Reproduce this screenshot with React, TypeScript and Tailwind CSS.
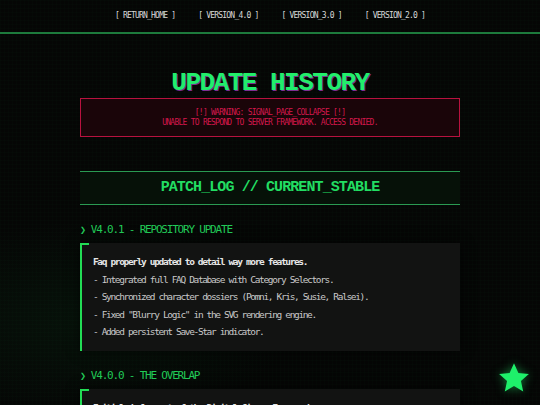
const navItems = ['RETURN_HOME', 'VERSION_4.0', 'VERSION_3.0', 'VERSION_2.0'];

const releases = [
  {
    id: 'v401',
    title: 'V4.0.1 - REPOSITORY UPDATE',
    lead: 'Faq properly updated to detail way more features.',
    notes: [
      'Integrated full FAQ Database with Category Selectors.',
      'Synchronized character dossiers (Pomni, Kris, Susie, Ralsei).',
      'Fixed "Blurry Logic" in the SVG rendering engine.',
      'Added persistent Save-Star indicator.',
    ],
  },
  {
    id: 'v400',
    title: 'V4.0.0 - THE OVERLAP',
    lead: 'Initial deployment of the Digital Circus Framework.',
    notes: [
      'Merged Dark World assets into the main repository.',
      'Rebuilt navigation terminal.',
    ],
  },
];

function SaveStar() {
  return (
    <svg viewBox="0 0 24 24" className="fixed bottom-[10px] right-[9px] h-[34px] w-[34px] drop-shadow-[0_0_5px_rgba(30,240,106,0.5)]">
      <path d="M12 1.5l3.1 6.9 7.4.8-5.6 5 1.6 7.3L12 17.7l-6.5 3.8 1.6-7.3-5.6-5 7.4-.8z" fill="#1ef06a" />
    </svg>
  );
}

export default function App() {
  return (
    <div className="relative min-h-[405px] overflow-hidden bg-[#050605] bg-[linear-gradient(rgba(40,255,120,0.012)_1px,transparent_1px),linear-gradient(90deg,rgba(40,255,120,0.012)_1px,transparent_1px)] bg-[size:4px_4px] font-['DejaVu_Sans_Mono',monospace]">
      <div className="pointer-events-none absolute left-[-120px] top-[220px] h-[200px] w-[420px] rounded-full bg-[radial-gradient(ellipse_at_center,rgba(20,120,50,0.1),transparent_70%)]" />

      <nav className="relative flex h-[34px] items-center justify-center gap-[23px] border-b-2 border-[#1d7a3c] text-[8px] tracking-[-0.8px] text-[#d8d8d8]">
        {navItems.map((item) => (
          <span key={item}>[ {item} ]</span>
        ))}
      </nav>

      <main className="relative mx-auto w-[380px]">
        <h1 className="mt-[36px] text-center font-['Liberation_Mono',monospace] text-[26px] font-bold leading-[26px] tracking-[-1.5px] text-[#22ee6a] [text-shadow:1px_1px_0_#7b2f8f]">
          UPDATE HISTORY
        </h1>

        <div className="mt-[2px] flex h-[39px] flex-col items-center justify-center border border-[#b8123f] bg-[#1a0509] text-[8px] leading-[10px] tracking-[-0.75px] text-[#d4184c]">
          <p>[!] WARNING: SIGNAL_PAGE_COLLAPSE [!]</p>
          <p>UNABLE TO RESPOND TO SERVER FRAMEWORK. ACCESS DENIED.</p>
        </div>

        <div className="mt-[34px] flex h-[34px] items-center justify-center border-y border-[#2a9a52] bg-[#061108] font-['Liberation_Mono',monospace] text-[15px] font-bold tracking-[-0.9px] text-[#22dd62]">
          PATCH_LOG // CURRENT_STABLE
        </div>

        {releases.map((release) => (
          <section key={release.id}>
            <h2 className="mt-[18px] flex h-[14px] items-center gap-[6px] text-[11px] leading-[14px] tracking-[-1.2px] text-[#22cc58]">
              <span className="text-[10px] font-bold">❯</span>
              <span>{release.title}</span>
            </h2>
            <div className="relative mt-[6px] border-l-2 border-[#22dd55] bg-[#121312] py-[10px] pl-[11px] text-[9.5px] leading-[17.5px] tracking-[-1.35px] text-[#c8c8c8] shadow-[0_0_12px_rgba(0,0,0,0.6)]">
              <span className="absolute left-[-2px] top-0 h-[2px] w-[9px] bg-[#22dd55]" />
              <p className="font-bold text-[#e6e6e6]">{release.lead}</p>
              {release.notes.map((note) => (
                <p key={note}>- {note}</p>
              ))}
            </div>
          </section>
        ))}
      </main>

      <SaveStar />
    </div>
  );
}
